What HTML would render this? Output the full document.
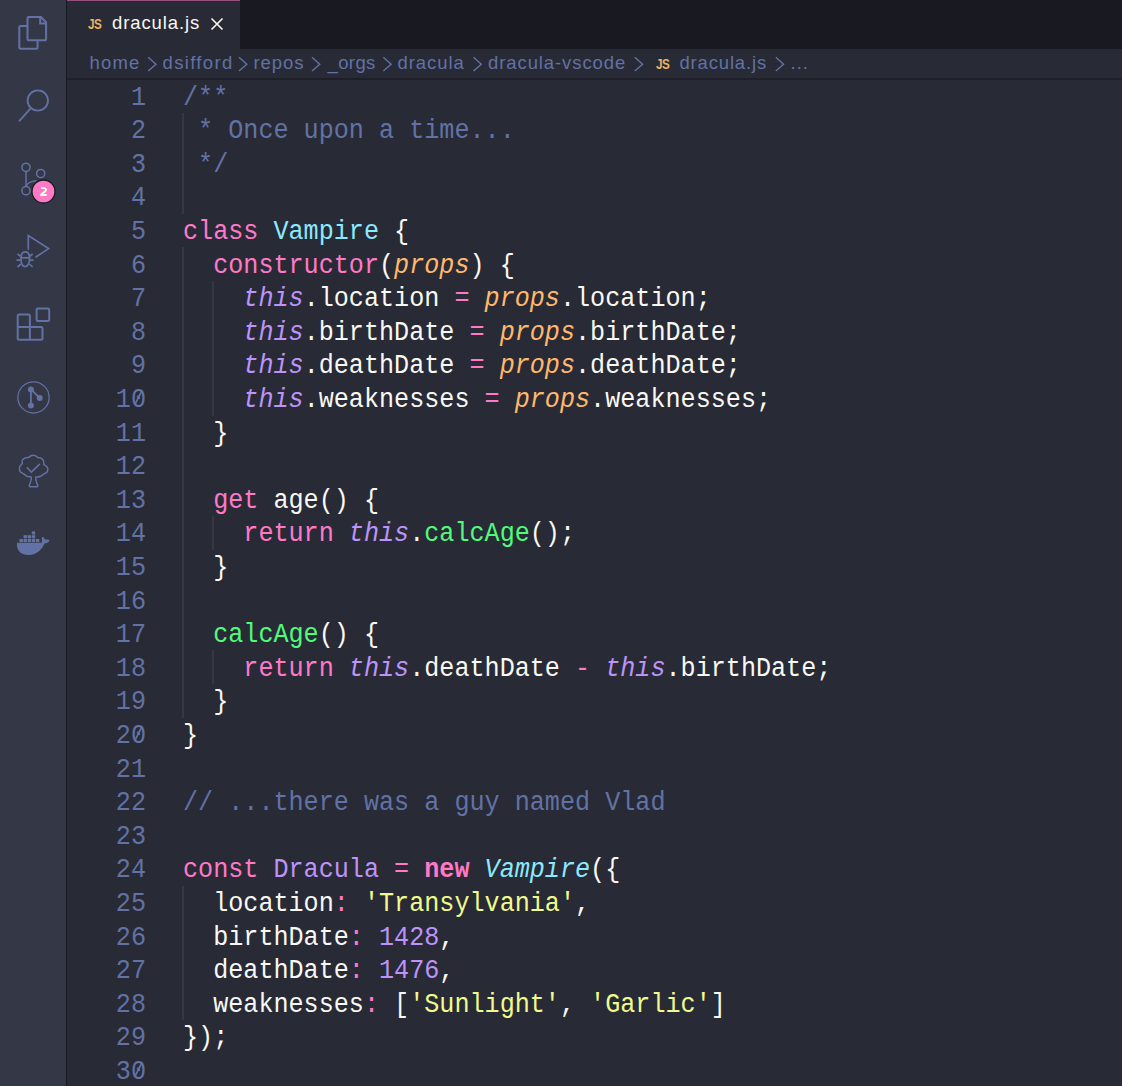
<!DOCTYPE html>
<html><head><meta charset="utf-8"><style>
*{margin:0;padding:0;box-sizing:border-box}
html,body{width:1122px;height:1086px;overflow:hidden;background:#282A36}
body{position:relative;font-family:"Liberation Sans",sans-serif}
#act{position:absolute;left:0;top:0;width:67px;height:1086px;background:#343746;border-right:1px solid #191A21}
#act svg{position:absolute;left:0;top:0}
#tabs{position:absolute;left:67px;top:0;width:1055px;height:49px;background:#191A21}
#tab{position:absolute;left:67px;top:0;width:173px;height:49px;background:#282A36;border-top:1.4px solid #94507E}
.tt{position:absolute;color:#F8F8F2;font-size:18.5px;line-height:20px;letter-spacing:0.9px;white-space:pre}
#crumb{position:absolute;left:67px;top:49px;width:1055px;height:29px;background:#282A36}
#cline{position:absolute;left:67px;top:78px;width:1055px;height:2px;background:#1E1F29}
.bc{position:absolute;top:53.2px;color:#6272A4;font-size:18.5px;line-height:20px;white-space:pre}
.js{position:absolute;font-weight:bold;color:#E9B464;font-size:15px;line-height:16px;letter-spacing:-0.5px;transform:scaleX(0.78);transform-origin:0 0}
.ln{position:absolute;left:183px;height:33.6px;line-height:33.6px;font-family:"Liberation Mono",monospace;font-size:25.13px;white-space:pre;color:#F8F8F2;transform:scaleY(1.13);transform-origin:0 23.49px}
.num{position:absolute;left:86px;width:60px;text-align:right;height:33.6px;line-height:33.6px;font-family:"Liberation Mono",monospace;font-size:25.13px;white-space:pre;color:#6272A4;transform:scaleY(1.13);transform-origin:0 23.49px}
.g{position:absolute;width:2px;height:34.10px;background:#353744}
</style></head><body>
<div id="act">
<svg width="66" height="600" viewBox="0 0 66 600" fill="none" stroke="#6272A4" stroke-width="2">
<!-- files -->
<path d="M27.5 26.1H20.6a1.3 1.3 0 0 0-1.3 1.3V47.5a1.3 1.3 0 0 0 1.3 1.3H36.3a1.3 1.3 0 0 0 1.3-1.3V40.3"/>
<path d="M28.8 17.1H41L46.1 22.5V39a1.3 1.3 0 0 1-1.3 1.3H28.8a1.3 1.3 0 0 1-1.3-1.3V18.4a1.3 1.3 0 0 1 1.3-1.3z"/>
<path d="M40.2 17.5V23.5H46"/>
<!-- search -->
<circle cx="37.8" cy="100.5" r="10.2" stroke-width="1.8"/>
<path d="M30.4 108.6L19 121.4" stroke-width="1.8"/>
<!-- scm -->
<g stroke-width="1.5">
<circle cx="26" cy="167.3" r="4.1"/>
<circle cx="40.7" cy="173.5" r="4.1"/>
<circle cx="26" cy="190.7" r="4.1"/>
<path d="M26 171.4V186.6"/>
<path d="M26 186.2C27.5 182.5 31 181.3 36.5 180.8"/>
</g>
<circle cx="43.5" cy="191.5" r="11.5" fill="#FF79C6" stroke="#191A21" stroke-width="1.3"/>
<path d="M41 188.1H44.2C45.4 188.1 46 188.8 46 189.8C46 190.6 45.6 191.1 44.9 191.6L41 194.8V195H46.7" stroke="#F8F8F2" stroke-width="1.9" fill="none" stroke-linejoin="round"/>
<!-- debug -->
<g stroke-width="1.7">
<path d="M28.3 249.8V235.5L48.6 248.6L35.5 257.3"/>
<path d="M21 258.5C21 254 22.5 251.8 25.2 251.8C27.9 251.8 29.6 254 29.6 258.5C29.6 263.5 27.6 266.6 25.2 266.6C22.8 266.6 21 263.5 21 258.5Z"/>
<path d="M21 257.8H29.6"/>
<path d="M17.5 254L21 256.5M32.6 254L29.4 256.5M16.5 260.2H20.6M33.5 260.2H29.8M17.5 267L21 264M32.6 267L29.4 264"/>
</g>
<!-- extensions -->
<path d="M17.7 315.9a1.3 1.3 0 0 1 1.3-1.3H28.6a1.3 1.3 0 0 1 1.3 1.3V327H41.2a1.3 1.3 0 0 1 1.3 1.3V338.5a1.3 1.3 0 0 1-1.3 1.3H19a1.3 1.3 0 0 1-1.3-1.3Z"/>
<path d="M17.7 327H29.9V339.8"/>
<rect x="36.6" y="308.4" width="12.6" height="12.6" rx="1.3"/>
<!-- gitlens -->
<circle cx="33.5" cy="397.4" r="15.6" stroke-width="1.25"/>
<g fill="#6272A4" stroke="none">
<circle cx="30.9" cy="389.4" r="3"/>
<circle cx="30.9" cy="405.6" r="3"/>
<circle cx="39.7" cy="397.9" r="3"/>
</g>
<path d="M30.9 389.4V405.6M30.9 389.4L39.7 397.9" stroke-width="1.8"/>
<!-- tree -->
<path stroke-width="1.5" transform="translate(33.6 470.5) scale(0.97) translate(-33.6 -469.8)" d="M31.2 476.6C30.5 476 28 476.8 26.5 475.5C25 474.6 24 473.5 22 472.5C19.5 471.5 18.8 469 19 467C19.3 465 20.5 464.3 22 462.6C21.5 460.5 22 458.2 24 457.3C25.5 456.4 27 456.5 28.8 456.2C29.8 454.6 31.5 454 33.5 454C35.5 454 36.8 455 37.8 456.4C40 456.6 42.5 457 43.6 459.5C44.4 461.1 44 462.5 44.2 463.8C47 465 48.5 466.5 48.3 469.2C48 471.5 46.5 472.5 45 473C43 474 41.8 475.3 40 476C38.5 476.8 36.6 476.2 35.8 476.6C35.5 479 36.2 481 37 483C37.8 484.5 38.3 486.5 37.3 486.5H29.6C28.6 486.5 29.2 484.5 30 483C30.8 481 31.5 479 31.2 476.6Z"/>
<path d="M26.8 467.3L31.4 472.1L39.9 463.9" stroke-width="1.5"/>
<!-- docker -->
<g fill="#6272A4" stroke="none">
<path d="M17 542.8H41.6C42 541.5 42.3 539.5 41.6 537.5C42.5 536.5 43.5 536.8 44.2 538.3C44.6 539.2 45 539.6 46 539.6C47.8 539.4 49 540 49.6 540.6C48.7 542.2 47.2 543.4 44.5 543.6C42.5 549 37 555 28.5 555C21.5 555 17.5 551 17 546Z"/>
<rect x="19.5" y="539" width="3.4" height="3.1"/>
<rect x="23.6" y="539" width="3.4" height="3.1"/>
<rect x="27.7" y="539" width="3.4" height="3.1"/>
<rect x="31.8" y="539" width="3.4" height="3.1"/>
<rect x="35.9" y="539" width="3.4" height="3.1"/>
<rect x="23.6" y="535.2" width="3.4" height="3.1"/>
<rect x="27.7" y="535.2" width="3.4" height="3.1"/>
<rect x="31.8" y="535.2" width="3.4" height="3.1"/>
<rect x="31.8" y="531.4" width="3.4" height="3.1"/>
</g>
</svg>

</div>
<div id="tabs"></div>
<div id="tab"></div>
<span class="js" style="left:88px;top:16px">JS</span>
<span class="tt" style="left:112px;top:13.4px">dracula.js</span>
<svg style="position:absolute;left:205px;top:12px" width="24" height="24" viewBox="0 0 24 24"><path d="M6.5 6.5L17.5 17.5M17.5 6.5L6.5 17.5" stroke="#F8F8F2" stroke-width="1.6"/></svg>
<div id="crumb"></div>
<div id="cline"></div>
<span class="bc" style="left:89.5px;letter-spacing:1.2px">home</span>
<span class="bc" style="left:162.5px;letter-spacing:1.35px">dsifford</span>
<span class="bc" style="left:253.5px;letter-spacing:0.9px">repos</span>
<span class="bc" style="left:327.5px;letter-spacing:0.38px">_orgs</span>
<span class="bc" style="left:397.5px;letter-spacing:0.93px">dracula</span>
<span class="bc" style="left:488px;letter-spacing:0.91px">dracula-vscode</span>
<span class="js" style="left:656px;top:55.5px">JS</span>
<span class="bc" style="left:679.5px;letter-spacing:0.83px">dracula.js</span>
<span class="bc" style="left:790.5px;letter-spacing:1px">...</span>
<svg style="position:absolute;left:0;top:49px" width="800" height="29" viewBox="0 49 800 29" fill="none" stroke="#6272A4" stroke-width="1.4">
<path d="M148.2 57.3L156 64.2L148.2 71.1"/>
<path d="M239 57.3L246.8 64.2L239 71.1"/>
<path d="M312 57.3L319.8 64.2L312 71.1"/>
<path d="M383.3 57.3L391.1 64.2L383.3 71.1"/>
<path d="M473.5 57.3L481.3 64.2L473.5 71.1"/>
<path d="M634.8 57.3L642.6 64.2L634.8 71.1"/>
<path d="M775.8 57.3L783.6 64.2L775.8 71.1"/>
</svg>

<div class="g" style="left:182px;top:112.80px"></div><div class="g" style="left:182px;top:146.40px"></div><div class="g" style="left:182px;top:180.00px"></div><div class="g" style="left:182px;top:247.20px"></div><div class="g" style="left:182px;top:280.80px"></div><div class="g" style="left:212px;top:280.80px"></div><div class="g" style="left:182px;top:314.40px"></div><div class="g" style="left:212px;top:314.40px"></div><div class="g" style="left:182px;top:348.00px"></div><div class="g" style="left:212px;top:348.00px"></div><div class="g" style="left:182px;top:381.60px"></div><div class="g" style="left:212px;top:381.60px"></div><div class="g" style="left:182px;top:415.20px"></div><div class="g" style="left:182px;top:448.80px"></div><div class="g" style="left:182px;top:482.40px"></div><div class="g" style="left:182px;top:516.00px"></div><div class="g" style="left:212px;top:516.00px"></div><div class="g" style="left:182px;top:549.60px"></div><div class="g" style="left:182px;top:583.20px"></div><div class="g" style="left:182px;top:616.80px"></div><div class="g" style="left:182px;top:650.40px"></div><div class="g" style="left:212px;top:650.40px"></div><div class="g" style="left:182px;top:684.00px"></div><div class="g" style="left:182px;top:885.60px"></div><div class="g" style="left:182px;top:919.20px"></div><div class="g" style="left:182px;top:952.80px"></div><div class="g" style="left:182px;top:986.40px"></div>
<div class="ln" style="top:81.60px"><span style="color:#6272A4">/**</span></div><div class="num" style="top:81.60px">1</div><div class="ln" style="top:115.20px"><span style="color:#6272A4"> * Once upon a time...</span></div><div class="num" style="top:115.20px">2</div><div class="ln" style="top:148.80px"><span style="color:#6272A4"> */</span></div><div class="num" style="top:148.80px">3</div><div class="ln" style="top:182.40px"></div><div class="num" style="top:182.40px">4</div><div class="ln" style="top:216.00px"><span style="color:#FF79C6">class</span><span style="color:#F8F8F2"> </span><span style="color:#8BE9FD">Vampire</span><span style="color:#F8F8F2"> {</span></div><div class="num" style="top:216.00px">5</div><div class="ln" style="top:249.60px"><span style="color:#F8F8F2">  </span><span style="color:#FF79C6">constructor</span><span style="color:#F8F8F2">(</span><span style="color:#FFB86C;font-style:italic">props</span><span style="color:#F8F8F2">) {</span></div><div class="num" style="top:249.60px">6</div><div class="ln" style="top:283.20px"><span style="color:#F8F8F2">    </span><span style="color:#BD93F9;font-style:italic">this</span><span style="color:#F8F8F2">.location </span><span style="color:#FF79C6">=</span><span style="color:#F8F8F2"> </span><span style="color:#FFB86C;font-style:italic">props</span><span style="color:#F8F8F2">.location;</span></div><div class="num" style="top:283.20px">7</div><div class="ln" style="top:316.80px"><span style="color:#F8F8F2">    </span><span style="color:#BD93F9;font-style:italic">this</span><span style="color:#F8F8F2">.birthDate </span><span style="color:#FF79C6">=</span><span style="color:#F8F8F2"> </span><span style="color:#FFB86C;font-style:italic">props</span><span style="color:#F8F8F2">.birthDate;</span></div><div class="num" style="top:316.80px">8</div><div class="ln" style="top:350.40px"><span style="color:#F8F8F2">    </span><span style="color:#BD93F9;font-style:italic">this</span><span style="color:#F8F8F2">.deathDate </span><span style="color:#FF79C6">=</span><span style="color:#F8F8F2"> </span><span style="color:#FFB86C;font-style:italic">props</span><span style="color:#F8F8F2">.deathDate;</span></div><div class="num" style="top:350.40px">9</div><div class="ln" style="top:384.00px"><span style="color:#F8F8F2">    </span><span style="color:#BD93F9;font-style:italic">this</span><span style="color:#F8F8F2">.weaknesses </span><span style="color:#FF79C6">=</span><span style="color:#F8F8F2"> </span><span style="color:#FFB86C;font-style:italic">props</span><span style="color:#F8F8F2">.weaknesses;</span></div><div class="num" style="top:384.00px">10</div><div class="ln" style="top:417.60px"><span style="color:#F8F8F2">  }</span></div><div class="num" style="top:417.60px">11</div><div class="ln" style="top:451.20px"></div><div class="num" style="top:451.20px">12</div><div class="ln" style="top:484.80px"><span style="color:#F8F8F2">  </span><span style="color:#FF79C6">get</span><span style="color:#F8F8F2"> age() {</span></div><div class="num" style="top:484.80px">13</div><div class="ln" style="top:518.40px"><span style="color:#F8F8F2">    </span><span style="color:#FF79C6">return</span><span style="color:#F8F8F2"> </span><span style="color:#BD93F9;font-style:italic">this</span><span style="color:#F8F8F2">.</span><span style="color:#50FA7B">calcAge</span><span style="color:#F8F8F2">();</span></div><div class="num" style="top:518.40px">14</div><div class="ln" style="top:552.00px"><span style="color:#F8F8F2">  }</span></div><div class="num" style="top:552.00px">15</div><div class="ln" style="top:585.60px"></div><div class="num" style="top:585.60px">16</div><div class="ln" style="top:619.20px"><span style="color:#F8F8F2">  </span><span style="color:#50FA7B">calcAge</span><span style="color:#F8F8F2">() {</span></div><div class="num" style="top:619.20px">17</div><div class="ln" style="top:652.80px"><span style="color:#F8F8F2">    </span><span style="color:#FF79C6">return</span><span style="color:#F8F8F2"> </span><span style="color:#BD93F9;font-style:italic">this</span><span style="color:#F8F8F2">.deathDate </span><span style="color:#FF79C6">-</span><span style="color:#F8F8F2"> </span><span style="color:#BD93F9;font-style:italic">this</span><span style="color:#F8F8F2">.birthDate;</span></div><div class="num" style="top:652.80px">18</div><div class="ln" style="top:686.40px"><span style="color:#F8F8F2">  }</span></div><div class="num" style="top:686.40px">19</div><div class="ln" style="top:720.00px"><span style="color:#F8F8F2">}</span></div><div class="num" style="top:720.00px">20</div><div class="ln" style="top:753.60px"></div><div class="num" style="top:753.60px">21</div><div class="ln" style="top:787.20px"><span style="color:#6272A4">// ...there was a guy named Vlad</span></div><div class="num" style="top:787.20px">22</div><div class="ln" style="top:820.80px"></div><div class="num" style="top:820.80px">23</div><div class="ln" style="top:854.40px"><span style="color:#FF79C6">const</span><span style="color:#F8F8F2"> </span><span style="color:#BD93F9">Dracula</span><span style="color:#F8F8F2"> </span><span style="color:#FF79C6">=</span><span style="color:#F8F8F2"> </span><span style="color:#FF79C6;font-weight:bold">new</span><span style="color:#F8F8F2"> </span><span style="color:#8BE9FD;font-style:italic">Vampire</span><span style="color:#F8F8F2">({</span></div><div class="num" style="top:854.40px">24</div><div class="ln" style="top:888.00px"><span style="color:#F8F8F2">  location</span><span style="color:#FF79C6">:</span><span style="color:#F8F8F2"> </span><span style="color:#F1FA8C">'Transylvania'</span><span style="color:#F8F8F2">,</span></div><div class="num" style="top:888.00px">25</div><div class="ln" style="top:921.60px"><span style="color:#F8F8F2">  birthDate</span><span style="color:#FF79C6">:</span><span style="color:#F8F8F2"> </span><span style="color:#BD93F9">1428</span><span style="color:#F8F8F2">,</span></div><div class="num" style="top:921.60px">26</div><div class="ln" style="top:955.20px"><span style="color:#F8F8F2">  deathDate</span><span style="color:#FF79C6">:</span><span style="color:#F8F8F2"> </span><span style="color:#BD93F9">1476</span><span style="color:#F8F8F2">,</span></div><div class="num" style="top:955.20px">27</div><div class="ln" style="top:988.80px"><span style="color:#F8F8F2">  weaknesses</span><span style="color:#FF79C6">:</span><span style="color:#F8F8F2"> [</span><span style="color:#F1FA8C">'Sunlight'</span><span style="color:#F8F8F2">, </span><span style="color:#F1FA8C">'Garlic'</span><span style="color:#F8F8F2">]</span></div><div class="num" style="top:988.80px">28</div><div class="ln" style="top:1022.40px"><span style="color:#F8F8F2">});</span></div><div class="num" style="top:1022.40px">29</div><div class="ln" style="top:1056.00px"></div><div class="num" style="top:1056.00px">30</div>
<svg style="position:absolute;left:130px;top:386.99px" width="18" height="22" viewBox="0 0 18 22"><path d="M5.2 16.8L12.2 3.2" stroke="#6272A4" stroke-width="1.7" fill="none"/></svg><svg style="position:absolute;left:130px;top:722.99px" width="18" height="22" viewBox="0 0 18 22"><path d="M5.2 16.8L12.2 3.2" stroke="#6272A4" stroke-width="1.7" fill="none"/></svg><svg style="position:absolute;left:130px;top:1058.99px" width="18" height="22" viewBox="0 0 18 22"><path d="M5.2 16.8L12.2 3.2" stroke="#6272A4" stroke-width="1.7" fill="none"/></svg>
</body></html>
